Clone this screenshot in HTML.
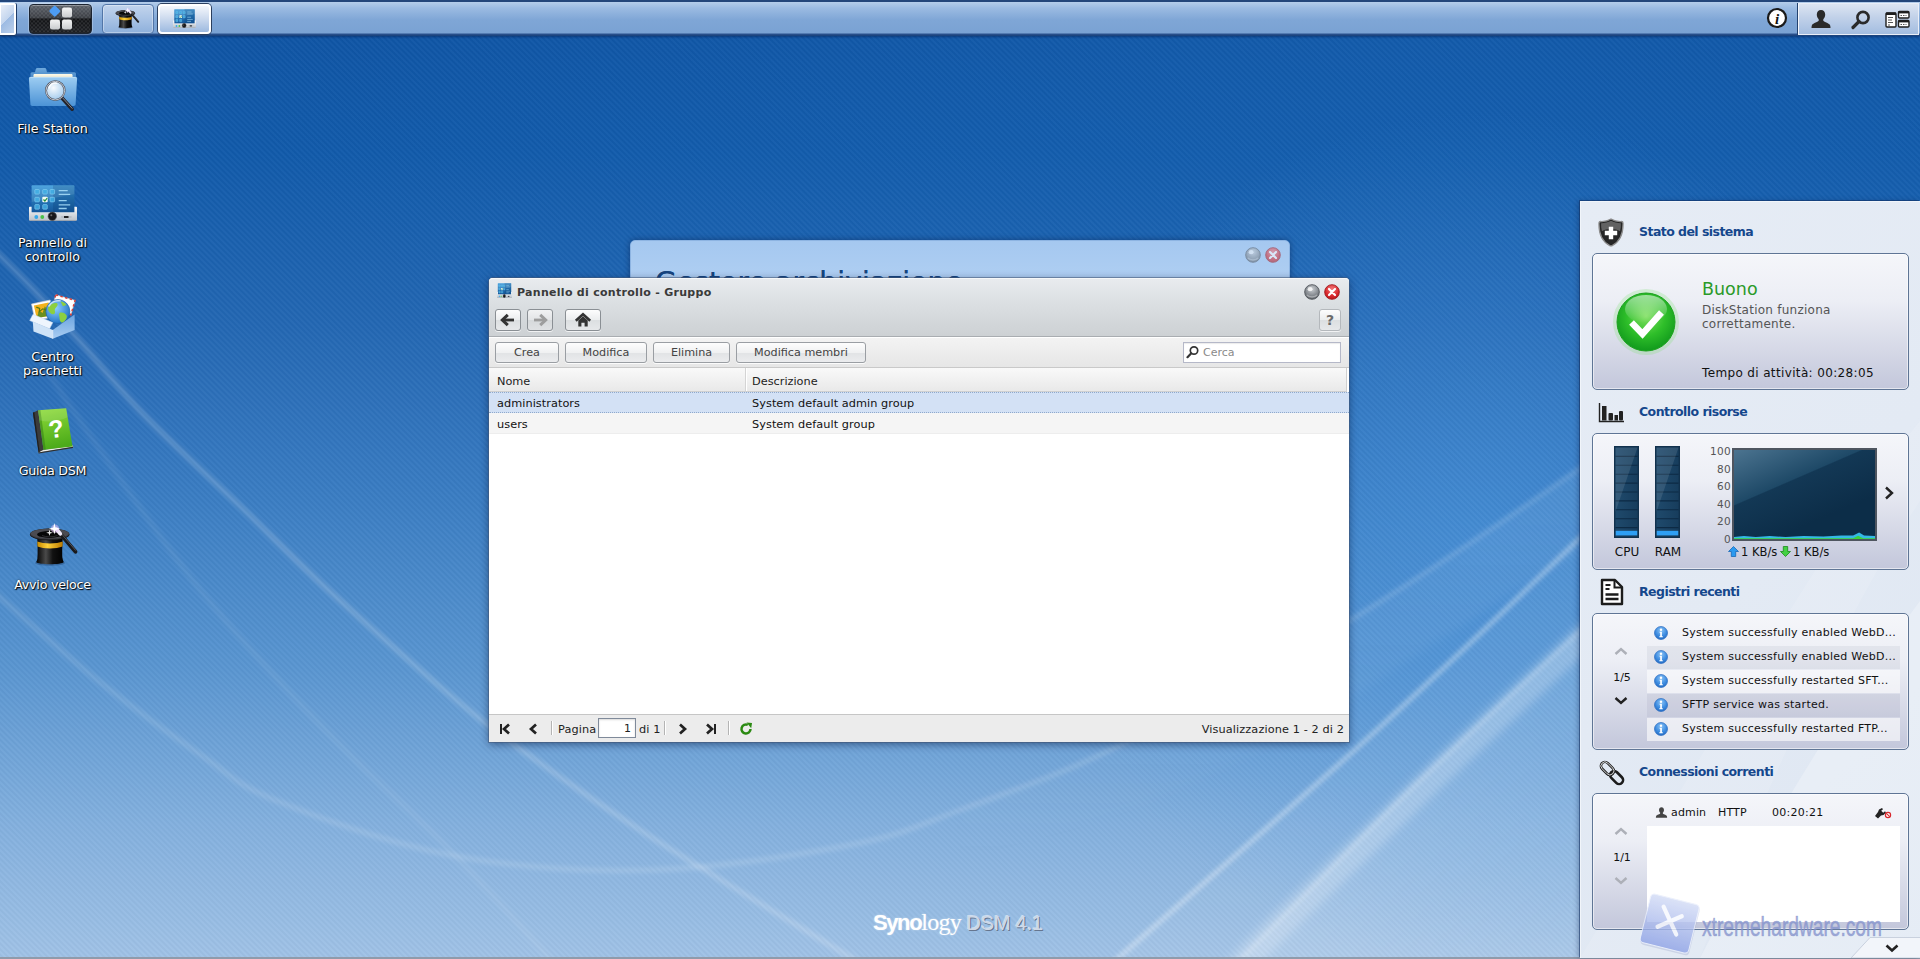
<!DOCTYPE html>
<html lang="it">
<head>
<meta charset="utf-8">
<title>Synology DiskStation</title>
<style>
*{box-sizing:border-box;margin:0;padding:0}
html,body{width:1920px;height:959px;overflow:hidden}
body{font-family:"DejaVu Sans","Liberation Sans",sans-serif;font-size:11px;color:#222;position:relative;background:#1558a6}
.abs{position:absolute}
/* ---------- wallpaper ---------- */
#wall{position:absolute;left:0;top:0;width:1920px;height:959px;
 background:linear-gradient(180deg,#0f51a0 0px,#1359a8 150px,#2467b3 330px,#3a79bf 500px,#5a90cc 680px,#7eaadb 830px,#93b9e2 959px)}
#wall svg{position:absolute;left:0;top:0}
#stripes{position:absolute;left:0;top:0;width:1920px;height:959px;
 background:repeating-linear-gradient(45deg,rgba(255,255,255,.035) 0,rgba(255,255,255,.035) 2px,rgba(0,0,0,.02) 2px,rgba(0,0,0,.02) 4px)}
/* ---------- taskbar ---------- */
#taskbar{position:absolute;left:0;top:0;width:1920px;height:36px;box-shadow:0 1px 2px rgba(0,20,70,.45);
 background:linear-gradient(180deg,#23467a 0,#23467a 2px,#b4cdea 2px,#9bbbe2 8px,#7fa6d6 20px,#7aa2d3 33px,#2d5490 34px,#163f78 36px)}

/* taskbar items */
#showdesk{position:absolute;left:0;top:3px;width:16px;height:32px;border:2px solid #fff;border-left:1px solid #fff;border-radius:0 2px 2px 0;
 background:linear-gradient(135deg,#e8eef8 0%,#c3d5ee 50%,#9dbbe3 51%,#bcd0eb 100%);box-shadow:1px 0 0 #1d3a66,0 1px 0 #1d3a66}
.tb{position:absolute;top:4px;height:30px;border-radius:4px}
#tbmenu{left:29px;width:63px;border:1px solid #1b2431;background:linear-gradient(180deg,#5b6068 0,#3a3d43 45%,#121316 50%,#1d1f23 100%);box-shadow:0 0 0 1px rgba(255,255,255,.25),inset 0 1px 0 rgba(255,255,255,.3)}
#tbhat{left:102px;width:52px;border:1px solid #5276a8;background:linear-gradient(180deg,#c2d4ec 0,#a9c3e5 50%,#8eb0db 100%);box-shadow:inset 0 0 0 1px rgba(255,255,255,.35)}
#tbcp{left:158px;width:53px;border:2px solid #fff;background:linear-gradient(180deg,#f4f7fc 0,#cfdcef 45%,#9dbae0 100%);box-shadow:0 0 0 1px #2b3f5e}
#tray{position:absolute;left:1798px;top:3px;width:121px;height:32px;border:1px solid #e9eef7;border-left:1px solid #f3f6fb;
 background:linear-gradient(180deg,#dde5f2 0,#c4d3ea 40%,#a3bde0 100%);box-shadow:-1px 0 0 #23426f}
/* ---------- desktop icons ---------- */
.dicon{position:absolute;left:0;width:105px;text-align:center;color:#fff;font-size:12.7px;line-height:14px;
 text-shadow:1px 1px 1px #000,0 0 2px rgba(0,0,0,.8)}
.dicon svg{display:block;margin:0 auto 8px}

/* ---------- windows ---------- */
#win2{position:absolute;left:630px;top:240px;width:660px;height:60px;border-radius:5px 5px 0 0;
 background:linear-gradient(180deg,#a5c8f0 0,#b4d2f3 100%);border:1px solid #8db4e2;box-shadow:0 0 6px rgba(0,20,60,.45);overflow:hidden}
#win2 .t{position:absolute;left:24px;top:25px;font-size:28px;color:#17457f;text-shadow:0 0 .6px #17457f;font-family:"DejaVu Sans",sans-serif;white-space:nowrap;letter-spacing:.2px}
#win{position:absolute;left:489px;top:278px;width:860px;height:464px;border-radius:4px 4px 0 0;background:#fff;
 box-shadow:0 0 0 1px rgba(70,90,120,.55),0 2px 8px rgba(0,20,60,.55)}
#whead{position:absolute;left:0;top:0;width:860px;height:59px;border-radius:4px 4px 0 0;
 background:linear-gradient(180deg,#e9ecef 0,#dfe3e6 30%,#d3d7da 75%,#cdd1d4 100%);border-bottom:1px solid #a9adb1;box-shadow:inset 0 1px 0 #f6f7f8}
#wtitle{position:absolute;left:28px;top:7.500px;font-weight:bold;font-size:11px;color:#3a3a3a;white-space:nowrap;line-height:14px;letter-spacing:.29px}
.nb{position:absolute;top:31px;height:22px;border:1px solid #8a8f94;border-radius:3px;background:linear-gradient(180deg,#fdfdfd 0,#ebedee 50%,#dcdfe1 51%,#e6e8ea 100%);box-shadow:0 1px 0 rgba(255,255,255,.7)}
#wtool{position:absolute;left:0;top:60px;width:860px;height:30px;background:linear-gradient(180deg,#f3f3f3 0,#e6e6e6 100%);border-bottom:1px solid #c9c9c9}
.btn{position:absolute;top:4px;height:21px;border:1px solid #9a9ea3;border-radius:3px;background:linear-gradient(180deg,#fdfdfd 0,#f0f1f2 50%,#e1e3e5 51%,#ebecee 100%);
 text-align:center;line-height:20px;color:#444;font-size:11.2px;box-shadow:0 1px 0 rgba(255,255,255,.8)}
#wsearch{position:absolute;left:694px;top:4px;width:158px;height:21px;border:1px solid #b5b8c8;background:#fff;box-shadow:inset 0 1px 1px rgba(0,0,0,.08)}
#wsearch span{position:absolute;left:19px;top:3px;color:#8a8a8a;font-size:11px}
#ghead{position:absolute;left:0;top:90px;width:858px;height:24px;background:linear-gradient(180deg,#f9f9f9 0,#e9e9e9 100%);border-bottom:1px solid #d0d0d0;border-right:1px solid #d0d0d0}
#ghead span{position:absolute;top:7px;font-size:11.3px;color:#222}
.grow{position:absolute;left:0;width:860px;height:21px;font-size:11.3px;color:#111;letter-spacing:.05px}
.grow span{position:absolute;top:5px}
#wfoot{position:absolute;left:0;top:436px;width:860px;height:28px;background:#ececec;border-top:1px solid #c6c6c6}
#wfoot .tx{position:absolute;top:8px;font-size:11.3px;color:#222;white-space:nowrap;letter-spacing:.1px}
#wfoot .sep{position:absolute;top:6px;width:1px;height:14px;background:#b4b4b4;box-shadow:1px 0 0 #fff}
.wb{position:absolute;width:16px;height:16px}

/* ---------- widget panel ---------- */
#panel{position:absolute;left:1580px;top:201px;width:340px;height:757px;background:linear-gradient(135deg,#e6ecf5 0,#e3eaf4 50%,#dde6f2 100%);
 box-shadow:inset 1px 1px 0 #f1f5fa,-1px -1px 0 rgba(20,50,100,.55),-2px 0 5px rgba(0,20,60,.3);overflow:hidden}
.ph{position:absolute;left:59px;font-weight:bold;font-size:12.5px;color:#15478c;white-space:nowrap;letter-spacing:-.55px;line-height:16px}
.pbox{position:absolute;left:12px;width:317px;height:137px;border:1px solid #5f7595;border-radius:5px;
 background:linear-gradient(180deg,#f5f6fa 0,#eceef5 35%,#d3d6e5 75%,#c3c7db 100%);box-shadow:inset 0 0 0 1px rgba(255,255,255,.55)}
.pgr{position:absolute;left:17px;width:24px;text-align:center;font-size:11px;color:#111}
.lrow{position:absolute;left:54px;width:253px;height:23px;font-size:11px;color:#111;white-space:nowrap}
.lrow span{position:absolute;left:35px;top:4px;letter-spacing:.25px}
.lrow svg{position:absolute;left:7px;top:4px}
</style>
</head>
<body>
<div id="wall">
<svg width="1920" height="959" viewBox="0 0 1920 959">
<defs>
<linearGradient id="wg" x1="0" y1="0" x2="0" y2="1">
<stop offset="0" stop-color="#0e53a3"/><stop offset=".16" stop-color="#115aaa"/><stop offset=".34" stop-color="#2367b3"/>
<stop offset=".52" stop-color="#3a7dc3"/><stop offset=".70" stop-color="#5a96d1"/><stop offset=".86" stop-color="#83b0de"/><stop offset="1" stop-color="#a0c2e6"/>
</linearGradient>
<radialGradient id="wr" cx=".72" cy=".05" r=".6"><stop offset="0" stop-color="#1c6abb" stop-opacity=".28"/><stop offset="1" stop-color="#1c6abb" stop-opacity="0"/></radialGradient>
<radialGradient id="wr2" cx="1480" cy="540" r="430" gradientUnits="userSpaceOnUse"><stop offset="0" stop-color="#4a96e0" stop-opacity=".5"/><stop offset="1" stop-color="#4a96e0" stop-opacity="0"/></radialGradient>
<linearGradient id="sheetC" x1="0" y1="0" x2="1" y2="1"><stop offset="0" stop-color="#fff" stop-opacity=".30"/><stop offset="1" stop-color="#fff" stop-opacity=".05"/></linearGradient>
<linearGradient id="sheetA" x1="0" y1="0" x2="0" y2="1"><stop offset="0" stop-color="#fff" stop-opacity=".13"/><stop offset="1" stop-color="#fff" stop-opacity="0"/></linearGradient>
<filter id="b1" x="-5%" y="-5%" width="110%" height="110%"><feGaussianBlur stdDeviation="2"/></filter>
<filter id="b3" x="-5%" y="-5%" width="110%" height="110%"><feGaussianBlur stdDeviation="4"/></filter>
<pattern id="stp" width="4" height="4" patternUnits="userSpaceOnUse" patternTransform="rotate(45)"><rect width="4" height="2" fill="#fff" fill-opacity=".032"/><rect y="2" width="4" height="2" fill="#000" fill-opacity=".022"/></pattern>
</defs>
<rect width="1920" height="959" fill="url(#wg)"/>
<rect width="1920" height="959" fill="url(#wr)"/>
<rect width="1920" height="959" fill="url(#wr2)"/>
<g filter="url(#b3)">
<path d="M960,810 C1006,793 1058,776 1123,744 C1188,712 1273,667 1349,621 C1425,575 1520,510 1578,470 C1636,430 1680,395 1950,200 L1950,330 C1700,470 1500,600 1349,700 C1200,790 1050,840 960,860 Z" fill="url(#sheetA)"/>
<path d="M1220,975 C1224,972 1216,983 1246,954 C1276,925 1345,854 1400,800 C1455,746 1528,680 1578,633 C1628,586 1680,539 1950,290 L1950,975 Z" fill="url(#sheetC)"/>
<path d="M1100,975 C1104,972 1078,994 1123,954 C1168,914 1292,807 1368,738 C1444,669 1523,593 1578,540 L1578,633 C1455,746 1276,925 1220,975 Z" fill="#fff" fill-opacity=".05"/>
<path d="M1232,975 C1276,925 1355,854 1410,800 C1465,746 1538,680 1588,633 C1628,596 1680,549 1950,300" stroke="#fff" stroke-opacity=".22" stroke-width="26" fill="none"/>
</g>
<g fill="none" stroke="#fff" filter="url(#b1)">
<path d="M-20,236 C-12,244 15,270 31,287 C47,304 58,317 77,338 C96,359 117,387 144,415 C171,443 208,476 240,506 C272,536 295,561 336,597 C377,633 433,683 484,722 C535,761 579,791 640,830 C701,869 807,931 850,957 C893,983 892,980 900,985" stroke-width="5" stroke-opacity=".22"/>
<path d="M-20,580 C-1,596 59,650 96,679 C133,708 171,735 201,755 C231,775 234,783 275,800 C316,817 388,843 450,855 C512,867 583,872 650,870 C717,868 798,855 850,845 C902,835 914,827 960,810 C1006,793 1058,776 1123,744 C1188,712 1273,667 1349,621 C1425,575 1520,510 1578,470 C1636,430 1680,395 1700,380" stroke-width="5" stroke-opacity=".15"/>
<path d="M40,360 C49,374 68,404 96,444 C124,484 166,548 206,597 C246,646 295,699 336,741 C377,783 413,812 450,850 C487,888 542,950 560,970" stroke-width="5" stroke-opacity=".08"/>
<path d="M1100,975 C1104,972 1078,994 1123,954 C1168,914 1292,807 1368,738 C1444,669 1523,593 1578,540 C1633,487 1680,440 1700,420" stroke-width="5" stroke-opacity=".34"/>
<path d="M1220,975 C1224,972 1216,983 1246,954 C1276,925 1345,854 1400,800 C1455,746 1528,680 1578,633 C1628,586 1680,539 1700,520" stroke-width="5" stroke-opacity=".22"/>
</g>
<rect width="1920" height="959" fill="url(#stp)"/>
<rect y="957" width="1920" height="2" fill="#8f9bab"/>
</svg>
</div>
<svg width="0" height="0" style="position:absolute">
<defs>
<linearGradient id="gFold" x1="0" y1="0" x2="0" y2="1"><stop offset="0" stop-color="#9dcdf2"/><stop offset="1" stop-color="#4c93d6"/></linearGradient>
<linearGradient id="gFoldB" x1="0" y1="0" x2="0" y2="1"><stop offset="0" stop-color="#6fa9dc"/><stop offset="1" stop-color="#3d7fc2"/></linearGradient>
<radialGradient id="gLens" cx=".4" cy=".35" r=".7"><stop offset="0" stop-color="#ffffff" stop-opacity=".95"/><stop offset="1" stop-color="#b9d8f2" stop-opacity=".75"/></radialGradient>
<linearGradient id="gScr" x1="0" y1="0" x2="0" y2="1"><stop offset="0" stop-color="#3a9ada"/><stop offset="1" stop-color="#14579a"/></linearGradient>
<linearGradient id="gBase" x1="0" y1="0" x2="0" y2="1"><stop offset="0" stop-color="#fafbfc"/><stop offset="1" stop-color="#b9c0c8"/></linearGradient>
<linearGradient id="gBox" x1="0" y1="0" x2="0" y2="1"><stop offset="0" stop-color="#6ba4e0"/><stop offset="1" stop-color="#a9cdf2"/></linearGradient>
<linearGradient id="gBook" x1="0" y1="0" x2=".2" y2="1"><stop offset="0" stop-color="#8fdc3a"/><stop offset="1" stop-color="#4cab1a"/></linearGradient>
<radialGradient id="gGlobe" cx=".4" cy=".35" r=".7"><stop offset="0" stop-color="#8fd0ff"/><stop offset="1" stop-color="#1c6fc4"/></radialGradient>
<linearGradient id="gHat" x1="0" y1="0" x2="1" y2="0"><stop offset="0" stop-color="#000"/><stop offset=".35" stop-color="#4a4a4a"/><stop offset=".6" stop-color="#111"/><stop offset="1" stop-color="#000"/></linearGradient>
<linearGradient id="gBand" x1="0" y1="0" x2="1" y2="0"><stop offset="0" stop-color="#c98a00"/><stop offset=".4" stop-color="#ffd23a"/><stop offset="1" stop-color="#b87800"/></linearGradient>
<radialGradient id="gMin" cx=".5" cy=".3" r=".8"><stop offset="0" stop-color="#c9cdd1"/><stop offset=".6" stop-color="#80858b"/><stop offset="1" stop-color="#4a4e54"/></radialGradient>
<radialGradient id="gCls" cx=".5" cy=".3" r=".8"><stop offset="0" stop-color="#f2787a"/><stop offset=".6" stop-color="#d8282c"/><stop offset="1" stop-color="#a81216"/></radialGradient>
<symbol id="bmin" viewBox="0 0 17 17"><circle cx="8.500" cy="8.500" r="7.800" fill="url(#gMin)" stroke="#4c5157" stroke-width=".9"/><ellipse cx="6.500" cy="5.500" rx="2.600" ry="2.200" fill="#fff" fill-opacity=".8"/><path d="M3 11.500c2 3 9 3 11 0" stroke="#fff" stroke-opacity=".35" stroke-width="1.500" fill="none"/></symbol>
<symbol id="bclose" viewBox="0 0 17 17"><circle cx="8.500" cy="8.500" r="7.800" fill="url(#gCls)" stroke="#9e1418" stroke-width=".9"/><path d="M5.300 5.300l6.400 6.400M11.700 5.300l-6.400 6.400" stroke="#fff" stroke-width="2.300" stroke-linecap="round"/></symbol>
<radialGradient id="gInfo" cx=".5" cy=".3" r=".8"><stop offset="0" stop-color="#8cc4f6"/><stop offset=".55" stop-color="#3c8be0"/><stop offset="1" stop-color="#1c5fb8"/></radialGradient>
<symbol id="iinfo" viewBox="0 0 14 14"><circle cx="7" cy="7" r="6.500" fill="url(#gInfo)" stroke="#2a6bc0" stroke-width=".7"/><circle cx="7" cy="3.800" r="1.200" fill="#fff"/><path d="M5.600 5.800h2.300v4.400h.9v1H5.300v-1h.9V6.800h-.6z" fill="#fff"/></symbol>
<symbol id="chv" viewBox="0 0 14 9"><path d="M1.500 7L7 2l5.500 5" stroke="currentColor" stroke-width="2.400" fill="none"/></symbol>
<radialGradient id="gOk" cx=".5" cy=".4" r=".6"><stop offset="0" stop-color="#7fe060"/><stop offset=".55" stop-color="#2fbf2a"/><stop offset="1" stop-color="#119a1c"/></radialGradient>
<linearGradient id="gOkH" x1="0" y1="0" x2="0" y2="1"><stop offset="0" stop-color="#fff" stop-opacity=".55"/><stop offset="1" stop-color="#fff" stop-opacity="0"/></linearGradient>
<linearGradient id="gBar" x1="0" y1="0" x2="1" y2="0"><stop offset="0" stop-color="#1f4a6c"/><stop offset="1" stop-color="#173d5d"/></linearGradient>
<linearGradient id="gCh" gradientUnits="userSpaceOnUse" x1="1" y1="1" x2="41" y2="92.800"><stop offset="0" stop-color="#4d7591"/><stop offset=".52" stop-color="#1e4967"/><stop offset=".532" stop-color="#133855"/><stop offset="1" stop-color="#0c2d48"/></linearGradient>
<symbol id="rbar" viewBox="0 0 26 92" preserveAspectRatio="none"><rect width="26" height="92" fill="#11314d"/><rect x="1.500" y="1.500" width="23" height="89" fill="url(#gBar)"/>
<path d="M1.500 10.400h23M1.500 19.300h23M1.500 28.200h23M1.500 37.100h23M1.500 46h23M1.500 54.900h23M1.500 63.800h23M1.500 72.700h23M1.500 81.600h23" stroke="#0d2a44" stroke-width="1.100"/>
<path d="M1.500 1.500h23L1.500 66z" fill="#fff" fill-opacity=".10"/><rect x="1.800" y="84.800" width="22.400" height="4.600" fill="#2e9ff4"/></symbol>
<symbol id="ifs" viewBox="0 0 50 48">
<path d="M2.500 8c0-1 .6-1.700 1.600-1.700H7l.8-3.200c.2-.7.700-1.100 1.400-1.100h7.600c.7 0 1.200.4 1.400 1.100l.8 3.200h27.400c1 0 1.600.7 1.600 1.700V14h-45.500z" fill="url(#gFoldB)"/>
<path d="M5.500 9.200c0-.7.500-1.200 1.200-1.200h36.600c.7 0 1.200.5 1.200 1.200V14h-39z" fill="#fbf8e6"/>
<path d="M6.200 10.200h37.600" stroke="#e6e2c8" stroke-width=".7"/>
<path d="M2.300 11h45.400c.9 0 1.500.7 1.400 1.600l-1.500 25.700c-.1 1-.9 1.700-1.900 1.700H4.300c-1 0-1.800-.7-1.900-1.700L.9 12.600C.8 11.700 1.400 11 2.300 11z" fill="url(#gFold)"/>
<path d="M2.300 11.400h45.400" stroke="#c4e2f8" stroke-width=".8"/>
<path d="M34.200 32.200l10 11" stroke="#23232a" stroke-width="3.600" stroke-linecap="round"/>
<path d="M34.800 32l9.300 10.300" stroke="#8a8f9c" stroke-width=".9" stroke-linecap="round"/>
<circle cx="27.300" cy="24.600" r="9" fill="url(#gLens)"/>
<circle cx="27.300" cy="24.600" r="9.300" fill="none" stroke="#4a4f5c" stroke-width="2"/>
<circle cx="27.300" cy="24.600" r="9.300" fill="none" stroke="#dfe3ea" stroke-width=".8"/>
<path d="M21 22c1.300-3.400 4.600-5.200 7.800-4.800" stroke="#fff" stroke-width="1.500" fill="none" stroke-linecap="round" stroke-opacity=".9"/>
</symbol>
<symbol id="icp" viewBox="0 0 48 36" preserveAspectRatio="none">
<rect x="2.600" y=".3" width="42.800" height="27" rx="1" fill="url(#gScr)"/>
<path d="M24 .3h21.400v27H24z" fill="#0b3c74" fill-opacity=".28"/>
<path d="M2.600 .3h42.800v9L2.600 17z" fill="#fff" fill-opacity=".10"/>
<g fill="#46b4e8" fill-opacity=".75" stroke="#8fd6f6" stroke-width=".7" stroke-opacity=".8"><rect x="5.800" y="4.500" width="4.600" height="4.600" rx=".8"/><rect x="13.700" y="4.500" width="4.600" height="4.600" rx=".8"/><rect x="21" y="4.500" width="4.600" height="4.600" rx=".8"/><rect x="5.800" y="12.300" width="4.600" height="4.600" rx=".8"/><rect x="21" y="12.300" width="4.600" height="4.600" rx=".8"/><rect x="5.800" y="19.600" width="4.600" height="4.600" rx=".8"/><rect x="13.700" y="19.600" width="4.600" height="4.600" rx=".8"/></g>
<rect x="13.300" y="11.800" width="5.400" height="5.400" rx="1" fill="#f2fbf4"/><path d="M14.500 14.500l1.400 1.500 2.300-3" stroke="#1f8f3a" stroke-width="1.200" fill="none"/>
<g stroke="#a9e0fb" stroke-width="1.300" stroke-opacity=".85"><path d="M29.700 5.700h9M29.700 9.400h11.500M29.700 15.600h8M29.700 19.800h11.500M29.700 23.500h8"/></g>
<path d="M0 22.500c0-.5.300-.8.800-.8h1.800v5.600h42.800v-5.600h1.800c.5 0 .8.300.8.800v12c0 .8-.7 1.500-1.500 1.500h-45c-.8 0-1.500-.7-1.500-1.500z" fill="url(#gBase)"/>
<path d="M1 35.600h46" stroke="#8e98a6" stroke-width=".8"/>
<circle cx="7.300" cy="32" r="1.900" fill="#35a8ea"/><circle cx="13.300" cy="32" r="1.900" fill="#4ac24a"/>
<circle cx="23.300" cy="31.300" r="4.200" fill="#17171a" stroke="#4d5158" stroke-width=".7"/><circle cx="22.300" cy="30.200" r="1" fill="#6a6a6a"/>
<rect x="31.800" y="31" width="11" height="2" rx="1" fill="#b9bfc7"/><rect x="35" y="31" width="4.500" height="2" fill="#1f2023"/>
</symbol>
<symbol id="ipkg" viewBox="0 0 48 48">
<g transform="rotate(16 33 12)"><rect x="24" y="3" width="20" height="15" fill="#fff" stroke="#d4d4d4" stroke-width=".6"/><path d="M24 3h20v15H24z" fill="none" stroke="#d8403a" stroke-width="1.500" stroke-dasharray="2.400 2.400"/></g>
<g transform="rotate(-12 13 16)"><rect x="4" y="8" width="19" height="17" fill="#fff" stroke="#cfcfcf" stroke-width=".6"/><rect x="6" y="10" width="15" height="13" fill="#f2b21c"/><path d="M6 23l4-7 3 3 3.500-6 4.500 10z" fill="#6a8f1f"/><path d="M8 12l3 2-1 3 4-2 3 2" stroke="#5a7a10" stroke-width="1.200" fill="none"/></g>
<circle cx="28.900" cy="17.500" r="12" fill="url(#gGlobe)" stroke="#1a5ea8" stroke-width=".6"/>
<path d="M20.500 12c2.200-2.400 5.500-3.600 7.800-2.500 1.200 1.700-1 3.500-2.200 5.200s1.200 4-1 5.200-4.500-1-5.700-3.400 0-3.400 1.100-4.500zM30.500 19c2.300-1.200 5.800 0 7 2.300s-1.200 5.800-3.500 7-3.500-2.300-3.500-4.600-1.200-3.500 0-4.700zM31.500 7.500c2.400 0 4.700 1.200 5.900 3.500l-3.500 1.200z" fill="#8ccf3f"/>
<path d="M20 12c2.300-4 7-5.800 11-5.200" stroke="#fff" stroke-opacity=".65" stroke-width="1.600" fill="none" stroke-linecap="round"/>
<path d="M3.800 27.500l19.900 8.400v8.800L4.500 37.400z" fill="#cfe3f7"/>
<path d="M23.700 35.900L45.600 20.500v15.400L23.700 44.700z" fill="url(#gBox)"/>
<path d="M0.700 26.500L4 20.300l19.800 8.300-3.200 6.200z" fill="#eef5fd" stroke="#c5dbf2" stroke-width=".5"/>
<path d="M23.700 28.600L45.600 20.500l1.800 5.500-23.700 9.900z" fill="#a9cbf0" fill-opacity=".0"/>
<path d="M23.700 35.900v8.800" stroke="#f2f8fe" stroke-width=".8"/>
</symbol>
<symbol id="ihelp" viewBox="0 0 48 48">
<path d="M9.800 44.600L44 39l-.4-1.800L10 42.500z" fill="#f4f4ee" stroke="#8b8b85" stroke-width=".5"/>
<path d="M9.600 45L44 39.400" stroke="#2e2e2e" stroke-width="1.100"/>
<path d="M3.900 4.800L9.100 2.300l5.400 39.400-4.900 2.700z" fill="#3b3b3b"/>
<path d="M3.900 4.800l1.400-.7 5.300 39.700-1 .6z" fill="#1f1f1f"/>
<path d="M9.100 2.300L37.200.2l6.300 38.200-29 3.300z" fill="url(#gBook)"/>
<path d="M9.100 2.300l2.300-.2 5.300 39.300-2.200.3z" fill="#2f7a12" fill-opacity=".5"/>
<path d="M9.100 2.300L37.200.2l1.500 9c-9 4-19 5.500-28.300 3z" fill="#fff" fill-opacity=".12"/>
<text x="27" y="29.500" font-family="Liberation Sans,sans-serif" font-weight="bold" font-size="25" text-anchor="middle" fill="#fff" style="text-shadow:none" transform="rotate(-8 27 20)">?</text>
</symbol>
<symbol id="ihat" viewBox="0 0 52 48">
<ellipse cx="23" cy="41" rx="15" ry="2.800" fill="#001030" fill-opacity=".25"/>
<path d="M10.200 14c0 0 1 17.500.2 22.500-.3 2-1.200 3.500-1.200 3.500 1.500 3 26.100 3 27.600 0 0 0-.9-1.500-1.200-3.500-.8-5 .2-22.500.2-22.500z" fill="url(#gHat)"/>
<path d="M10.300 19.600c6 2.600 19.400 2.600 25.400 0l-.2 5c-6 2.600-19 2.600-25 0z" fill="url(#gBand)"/>
<ellipse cx="22.700" cy="12.600" rx="19.800" ry="6" fill="#151517"/>
<ellipse cx="22.700" cy="12" rx="19.500" ry="5.500" fill="#3a3a3f"/>
<ellipse cx="22.700" cy="11.600" rx="19" ry="4.800" fill="#4b4b51"/>
<ellipse cx="22.700" cy="12.400" rx="12.600" ry="3.500" fill="#060607"/>
<path d="M15 13.500c4 1.800 11.500 1.800 15.500 0" stroke="#2c2c30" stroke-width="1" fill="none"/>
<path d="M32 10.200l16.500 19.500" stroke="#19191b" stroke-width="3.800" stroke-linecap="round"/>
<path d="M33 10l15.500 18.300" stroke="#5a5a60" stroke-width=".9" stroke-linecap="round"/>
<path d="M29.500 7.300l3.800 4.400" stroke="#efe9f8" stroke-width="3.800" stroke-linecap="round"/>
<circle cx="28" cy="6.700" r="4.200" fill="#e9c4ff" fill-opacity=".5"/>
<path d="M27.400 1l1.100 4.400 4.400 1.300-4.400 1.300-1.100 4.400-1.100-4.400-4.400-1.300 4.400-1.300z" fill="#fff"/>
<path d="M22.500 7.500l.7 2.600 2.600.7-2.600.7-.7 2.600-.7-2.600-2.600-.7 2.600-.7z" fill="#fff" fill-opacity=".9"/>
</symbol>
</defs></svg>

<div class="dicon" style="top:66px"><svg width="50" height="48" style="margin:0 0 8px 28px"><use href="#ifs"/></svg>File Station</div>
<div class="dicon" style="top:185px"><svg width="48" height="36" style="margin:0 0 15px 29px"><use href="#icp"/></svg>Pannello di<br>controllo</div>
<div class="dicon" style="top:294px"><svg width="48" height="48"><use href="#ipkg"/></svg>Centro<br>pacchetti</div>
<div class="dicon" style="top:408px"><svg width="48" height="48" style="margin:0 0 8px 29px"><use href="#ihelp"/></svg><span style="letter-spacing:-.3px">Guida DSM</span></div>
<div class="dicon" style="top:522px"><svg width="52" height="48"><use href="#ihat"/></svg><span style="letter-spacing:-.25px">Avvio veloce</span></div>
<div id="taskbar">
<div id="showdesk"></div>
<div class="tb" id="tbmenu"><svg width="61" height="28" viewBox="1 .600 61 28" style="position:absolute;left:0;top:0">
<defs><linearGradient id="sq" x1="0" y1="0" x2="0" y2="1"><stop offset="0" stop-color="#f4f4f4"/><stop offset="1" stop-color="#c9cbce"/></linearGradient>
<pattern id="chk" width="4" height="4" patternUnits="userSpaceOnUse"><rect width="2" height="2" fill="#fff" fill-opacity=".10"/><rect x="2" y="2" width="2" height="2" fill="#fff" fill-opacity=".10"/></pattern></defs>
<rect width="61" height="28" rx="3" fill="url(#chk)"/>
<rect x="33" y="3" width="10" height="10" rx="2" fill="url(#sq)"/><rect x="21" y="15" width="10" height="10" rx="2" fill="url(#sq)"/><rect x="33" y="15" width="10" height="10" rx="2" fill="url(#sq)"/>
<rect x="21.5" y="2.5" width="8.5" height="8.5" rx="1.5" fill="#4d9cf3" transform="rotate(45 25.75 6.75)"/></svg></div>
<div class="tb" id="tbhat"><svg width="26" height="24" style="position:absolute;left:11px;top:2px"><use href="#ihat"/></svg></div>
<div class="tb" id="tbcp"><svg width="23" height="19" style="position:absolute;left:13px;top:3px"><use href="#icp"/></svg></div>
<svg width="22" height="22" viewBox="0 0 22 22" style="position:absolute;left:1766px;top:7px"><circle cx="11" cy="11" r="9" fill="#fff" stroke="#1a1a1a" stroke-width="2.2"/><text x="11" y="16.5" font-family="Liberation Serif,serif" font-style="italic" font-weight="bold" font-size="15" text-anchor="middle" fill="#111">i</text></svg>
<div id="tray">
<svg width="22" height="20" viewBox="0 0 22 20" style="position:absolute;left:11px;top:5px"><path d="M11 1c2.6 0 4.2 2 4.2 4.6 0 1.900-.8 3.600-1.900 4.600v1.500c0 .9 5.700 2.300 6.700 4.300.4.800.5 2 .5 3h-19c0-1 .1-2.200.5-3 1-2 6.700-3.400 6.700-4.300v-1.500c-1.100-1-1.900-2.700-1.900-4.600 0-2.600 1.600-4.600 4.200-4.600z" fill="#2a2a2a"/></svg>
<svg width="22" height="22" viewBox="0 0 22 22" style="position:absolute;left:51px;top:5px"><circle cx="13" cy="8.500" r="5.600" fill="none" stroke="#2a2a2a" stroke-width="2.600"/><path d="M9 12.500L3 18.500" stroke="#2a2a2a" stroke-width="3.200" stroke-linecap="round"/></svg>
<svg width="26" height="20" viewBox="0 0 26 20" style="position:absolute;left:86px;top:6px"><rect x="1" y="3" width="10" height="14" rx="1" fill="#fff" stroke="#1d1d1d" stroke-width="1.400"/><rect x="1" y="2.500" width="10" height="2.500" fill="#1d1d1d"/><path d="M3 7.500h5M3 10h4M3 12.500h5M3 15h2" stroke="#555" stroke-width="1"/>
<rect x="13.500" y="1.500" width="10.500" height="6.500" rx="1" fill="#fff" stroke="#1d1d1d" stroke-width="1.400"/><rect x="13.500" y="1" width="10.500" height="2.400" fill="#1d1d1d"/><rect x="13.500" y="10.500" width="10.500" height="6.500" rx="1" fill="#fff" stroke="#1d1d1d" stroke-width="1.400"/><rect x="13.500" y="10" width="10.500" height="2.400" fill="#1d1d1d"/><path d="M15.500 5.500h6M15.500 14.500h6" stroke="#555" stroke-width="1" stroke-dasharray="1.500 1"/></svg>
</div>
</div>

<div id="win2"><div class="t">Gestore archiviazione</div>
<svg class="wb" style="left:614px;top:6px;opacity:.55" viewBox="0 0 17 17"><use href="#bmin"/></svg>
<svg class="wb" style="left:634px;top:6px;opacity:.55" viewBox="0 0 17 17"><use href="#bclose"/></svg>
</div>
<div id="win">
<div id="whead">
<svg width="15" height="15" style="position:absolute;left:8px;top:5px"><use href="#icp"/></svg>
<div id="wtitle">Pannello di controllo - Gruppo</div>
<svg class="wb" style="left:815px;top:6px" viewBox="0 0 17 17"><use href="#bmin"/></svg>
<svg class="wb" style="left:835px;top:6px" viewBox="0 0 17 17"><use href="#bclose"/></svg>
<div class="nb" style="left:6px;width:26px"><svg width="24" height="20" viewBox="0 0 24 20"><path d="M7.500 10h10.500" stroke="#333" stroke-width="2.800" fill="none"/><path d="M11.800 4.800L6.300 10l5.500 5.200" stroke="#333" stroke-width="3" fill="none" stroke-linejoin="miter"/></svg></div>
<div class="nb" style="left:38px;width:26px;background:linear-gradient(180deg,#f1f2f3 0,#e2e4e6 50%,#d6d9db 51%,#dfe1e3 100%)"><svg width="24" height="20" viewBox="0 0 24 20"><path d="M6 10h10.500" stroke="#9d9d9d" stroke-width="2.800" fill="none"/><path d="M12.200 4.800L17.700 10l-5.500 5.200" stroke="#9d9d9d" stroke-width="3" fill="none"/></svg></div>
<div class="nb" style="left:76px;width:36px"><svg width="34" height="20" viewBox="0 0 34 20"><path d="M9.800 10.800L17 4.300l7.200 6.500" stroke="#333" stroke-width="2.600" fill="none" stroke-linejoin="miter"/><path d="M12.300 10.500L17 6.300l4.700 4.200v6h-3.100v-3.800h-3.200v3.800h-3.100z" fill="#333"/></svg></div>
<div class="nb" style="left:830px;width:22px;border-color:#b4b8bc"><span style="position:absolute;left:0;width:20px;top:1px;text-align:center;font-weight:bold;font-size:14px;color:#6b6b6b;line-height:18px">?</span></div>
</div>
<div id="wtool">
<div class="btn" style="left:6px;width:64px">Crea</div>
<div class="btn" style="left:76px;width:82px">Modifica</div>
<div class="btn" style="left:164px;width:77px">Elimina</div>
<div class="btn" style="left:247px;width:130px">Modifica membri</div>
<div id="wsearch"><svg width="14" height="14" viewBox="0 0 14 14" style="position:absolute;left:2px;top:2px"><circle cx="8" cy="5.500" r="3.700" fill="none" stroke="#333" stroke-width="1.700"/><path d="M5.300 8.300L1.500 12.200" stroke="#333" stroke-width="2.200" stroke-linecap="round"/></svg><span>Cerca</span></div>
</div>
<div id="ghead"><span style="left:8px">Nome</span><span style="left:263px">Descrizione</span><i style="position:absolute;left:256px;top:0;width:1px;height:23px;background:#d4d4d4;box-shadow:1px 0 0 #fff"></i></div>
<div class="grow" style="top:114px;background:#d3e1f5;border-top:1px dotted #8fa9cc;border-bottom:1px dotted #8fa9cc"><span style="left:8px;top:4px">administrators</span><span style="left:263px;top:4px">System default admin group</span></div>
<div class="grow" style="top:135px;background:#f5f5f5;border-bottom:1px solid #ededed"><span style="left:8px">users</span><span style="left:263px">System default group</span></div>
<div id="wfoot">
<svg width="12" height="12" viewBox="0 0 12 12" style="position:absolute;left:10px;top:8px"><path d="M2 1v10" stroke="#222" stroke-width="2"/><path d="M10 1.500L5 6l5 4.500" stroke="#222" stroke-width="2.700" fill="none"/></svg>
<svg width="12" height="12" viewBox="0 0 12 12" style="position:absolute;left:38px;top:8px"><path d="M9 1.500L4 6l5 4.500" stroke="#222" stroke-width="2.700" fill="none"/></svg>
<i class="sep" style="left:62px"></i>
<span class="tx" style="left:69px">Pagina</span>
<div style="position:absolute;left:109px;top:3px;width:38px;height:20px;border:1px solid #7f8a9a;background:#fff;box-shadow:inset 0 1px 2px rgba(0,0,0,.15);font-size:11px;text-align:right;padding:3px 4px 0 0;color:#222">1</div>
<span class="tx" style="left:150px">di 1</span>
<i class="sep" style="left:175px"></i>
<svg width="12" height="12" viewBox="0 0 12 12" style="position:absolute;left:188px;top:8px"><path d="M3 1.500L8 6l-5 4.500" stroke="#222" stroke-width="2.700" fill="none"/></svg>
<svg width="12" height="12" viewBox="0 0 12 12" style="position:absolute;left:216px;top:8px"><path d="M10 1v10" stroke="#222" stroke-width="2"/><path d="M2 1.500L7 6l-5 4.500" stroke="#222" stroke-width="2.700" fill="none"/></svg>
<i class="sep" style="left:239px"></i>
<svg width="14" height="14" viewBox="0 0 14 14" style="position:absolute;left:250px;top:7px"><path d="M11.500 7A4.500 4.500 0 1 1 8.800 2.900" stroke="#2b8a12" stroke-width="2.500" fill="none"/><path d="M7.500 0.500L13 1 12.200 6.300z" fill="#2b8a12"/></svg>
<span class="tx" style="right:5px">Visualizzazione 1 - 2 di 2</span>
</div>
</div>

<div id="panel">
<svg style="position:absolute;left:0;top:0" width="340" height="757"><path d="M120,757 C200,600 280,480 340,400 L340,757 Z" fill="#fff" fill-opacity=".25"/><path d="M0,757 C120,560 250,330 340,220 L340,300 C260,420 180,600 120,757 Z" fill="#fff" fill-opacity=".12"/></svg>
<!-- Stato del sistema -->
<svg width="26" height="29" viewBox="0 0 26 29" style="position:absolute;left:18px;top:17px"><path d="M13 1c2.500 1.600 6.500 2.700 10.500 2.500 1 0 1.500.6 1.500 1.500.3 9-2 18-10.800 22.600-.8.400-1.600.400-2.400 0C3 23 .7 14 1 5c0-.9.500-1.500 1.500-1.500C6.500 3.700 10.500 2.600 13 1z" fill="#262626" stroke="#8c8c8c" stroke-width="1.300"/><path d="M13 2.800c2.700 1.500 6.300 2.400 9.900 2.400.1 2.700-.1 5.400-.8 8-4.800-2.800-13.400-2.800-18.200 0-.7-2.600-.9-5.300-.8-8 3.600 0 7.200-.9 9.900-2.400z" fill="#fff" fill-opacity=".28"/><path d="M10.800 8.800h4.400v4h4v4.400h-4v4h-4.400v-4h-4v-4.400h4z" fill="#fff"/></svg>
<div class="ph" style="top:23px">Stato del sistema</div>
<div class="pbox" style="top:52px">
<svg width="70" height="70" viewBox="0 0 70 70" style="position:absolute;left:18px;top:33px"><circle cx="35" cy="35" r="33" fill="#7de070" fill-opacity=".25"/><circle cx="35" cy="35" r="29" fill="url(#gOk)" stroke="#1da21f" stroke-width="1"/><ellipse cx="35" cy="22" rx="21" ry="14" fill="url(#gOkH)"/><path d="M20.500 35.500l11 11.500 19-21.500" stroke="#fff" stroke-width="6.500" fill="none"/></svg>
<div style="position:absolute;left:109px;top:25px;font-size:17.5px;color:#2a9a28;line-height:20px">Buono</div>
<div style="position:absolute;left:109px;top:49px;font-size:12px;color:#555;line-height:14px;white-space:nowrap;letter-spacing:.25px">DiskStation funziona<br>correttamente.</div>
<div style="position:absolute;left:109px;top:112px;font-size:12px;color:#111;line-height:14px;white-space:nowrap;letter-spacing:.36px">Tempo di attività: 00:28:05</div>
</div>
<!-- Controllo risorse -->
<svg width="27" height="20" viewBox="0 0 27 20" style="position:absolute;left:18px;top:202px"><path d="M1.500 0v18.500H26" stroke="#222" stroke-width="1.400" fill="none"/><rect x="4" y="3" width="4.500" height="14.500" fill="#222"/><rect x="10.500" y="10" width="4.500" height="7.500" rx="1" fill="#222"/><rect x="16.500" y="12" width="3.500" height="5.500" fill="#222"/><rect x="21" y="8" width="4" height="9.500" rx="1" fill="#222"/></svg>
<div class="ph" style="top:203px">Controllo risorse</div>
<div class="pbox" style="top:232px">
<svg width="25" height="92" preserveAspectRatio="none" style="position:absolute;left:21px;top:12px"><use href="#rbar"/></svg>
<svg width="25" height="92" preserveAspectRatio="none" style="position:absolute;left:62px;top:12px"><use href="#rbar"/></svg>
<div style="position:absolute;left:14px;width:40px;top:111px;text-align:center;font-size:12px;color:#111">CPU</div>
<div style="position:absolute;left:55px;width:40px;top:111px;text-align:center;font-size:12px;color:#111">RAM</div>
<div style="position:absolute;left:100px;top:9px;width:38px;text-align:right;font-size:10.5px;color:#555;line-height:17.600px;letter-spacing:.3px">100<br>80<br>60<br>40<br>20<br>0</div>
<svg width="145" height="93" viewBox="0 0 146 94" preserveAspectRatio="none" style="position:absolute;left:139px;top:14px"><rect x="1" y="1" width="144" height="92" fill="url(#gCh)" stroke="#4f5660" stroke-width="2"/><path d="M2 90l10-1 12 1 14-1 16 1 18-1 20 .500 18-1 12 0 6-3 5 3 11 .500V92H2z" fill="#35b8e6"/><path d="M2 91.200h120l5-2.500 5 2.500h12V92H2z" fill="#3bd23b"/></svg>
<svg width="10" height="14" viewBox="0 0 10 14" style="position:absolute;left:291px;top:52px"><path d="M2 1.500l6 5.500-6 5.500" stroke="#222" stroke-width="2.400" fill="none"/></svg>
<svg width="11" height="11" viewBox="0 0 11 11" style="position:absolute;left:135px;top:112px"><path d="M5.500 .5l5 5h-2.800v5H3.300v-5H.5z" fill="#2a9af0" stroke="#1668b8" stroke-width=".8"/></svg>
<div style="position:absolute;left:148px;top:111px;font-size:11.500px;color:#111;white-space:nowrap">1 KB/s</div>
<svg width="11" height="11" viewBox="0 0 11 11" style="position:absolute;left:187px;top:112px"><path d="M5.500 10.500l5-5h-2.800v-5H3.300v5H.5z" fill="#43d143" stroke="#1c8a1c" stroke-width=".8"/></svg>
<div style="position:absolute;left:200px;top:111px;font-size:11.500px;color:#111;white-space:nowrap">1 KB/s</div>
</div>
<!-- Registri recenti -->
<svg width="24" height="28" viewBox="0 0 24 28" style="position:absolute;left:20px;top:377px"><path d="M2 2h13l7 7v17H2z" fill="#fff" stroke="#1c1c1c" stroke-width="2.400" stroke-linejoin="round"/><path d="M14.500 2v7.500H22" fill="none" stroke="#1c1c1c" stroke-width="2"/><path d="M5.500 7h5M5.500 11h4" stroke="#1c1c1c" stroke-width="1.900"/><path d="M5.500 16.500h13M5.500 21h13" stroke="#1c1c1c" stroke-width="2.300"/></svg>
<div class="ph" style="top:383px">Registri recenti</div>
<div class="pbox" style="top:412px">
<svg width="14" height="9" style="position:absolute;left:21px;top:33px;color:#adb0b8"><use href="#chv"/></svg>
<div class="pgr" style="top:57px">1/5</div>
<svg width="14" height="9" style="position:absolute;left:21px;top:82px;color:#222;transform:rotate(180deg)"><use href="#chv"/></svg>
<div class="lrow" style="top:8px"><svg width="14" height="14"><use href="#iinfo"/></svg><span>System successfully enabled WebD...</span></div>
<div class="lrow" style="top:32px;background:rgba(120,125,150,.10)"><svg width="14" height="14"><use href="#iinfo"/></svg><span>System successfully enabled WebD...</span></div>
<div class="lrow" style="top:56px;background:rgba(255,255,255,.55)"><svg width="14" height="14"><use href="#iinfo"/></svg><span>System successfully restarted SFT...</span></div>
<div class="lrow" style="top:80px;background:rgba(130,135,160,.13)"><svg width="14" height="14"><use href="#iinfo"/></svg><span>SFTP service was started.</span></div>
<div class="lrow" style="top:104px;background:rgba(255,255,255,.6)"><svg width="14" height="14"><use href="#iinfo"/></svg><span>System successfully restarted FTP...</span></div>
</div>
<!-- Connessioni correnti -->
<svg width="26" height="26" viewBox="0 0 26 26" style="position:absolute;left:19px;top:559px"><g fill="none" stroke="#1c1c1c" stroke-width="2.600" transform="rotate(45 13 13)"><rect x="-1" y="9" width="15" height="8" rx="4"/><rect x="12" y="9" width="15" height="8" rx="4"/></g><g fill="none" stroke="#fff" stroke-width=".8" transform="rotate(45 13 13)"><rect x="-1" y="9" width="15" height="8" rx="4"/></g></svg>
<div class="ph" style="top:563px">Connessioni correnti</div>
<div class="pbox" style="top:592px">
<svg width="14" height="9" style="position:absolute;left:21px;top:33px;color:#adb0b8"><use href="#chv"/></svg>
<div class="pgr" style="top:57px">1/1</div>
<svg width="14" height="9" style="position:absolute;left:21px;top:82px;color:#adb0b8;transform:rotate(180deg)"><use href="#chv"/></svg>
<div style="position:absolute;left:54px;top:32px;width:253px;height:96px;background:#fff"></div>
<svg width="13" height="13" viewBox="0 0 22 20" style="position:absolute;left:62px;top:12px"><path d="M11 1c2.600 0 4.200 2 4.200 4.600 0 1.900-.8 3.600-1.900 4.600v1.500c0 .9 5.700 2.300 6.700 4.300.4.800.5 2 .5 3h-19c0-1 .1-2.200.5-3 1-2 6.700-3.400 6.700-4.300v-1.500c-1.100-1-1.900-2.700-1.900-4.600C6.800 3 8.400 1 11 1z" fill="#444"/></svg>
<div style="position:absolute;left:78px;top:12px;font-size:11px;color:#111;letter-spacing:.15px">admin</div>
<div style="position:absolute;left:125px;top:12px;font-size:11px;color:#111;letter-spacing:.15px">HTTP</div>
<div style="position:absolute;left:179px;top:12px;font-size:11px;color:#111;letter-spacing:.25px">00:20:21</div>
<svg width="18" height="12" viewBox="0 0 18 12" style="position:absolute;left:281px;top:13px"><path d="M1 9l3-4 1-2.500 3-1.500 1 1.200-1.800 1.600 2 2 1.800-1.600 1 1.300-2.500 2.500-2.500.5-3 3z" fill="#222"/><circle cx="14" cy="8" r="2.600" fill="#fff" stroke="#d8262c" stroke-width="1.200"/><path d="M12.300 6.400l3.400 3.200" stroke="#d8262c" stroke-width="1.100"/></svg>
</div>
<!-- watermark -->
<svg width="260" height="70" viewBox="0 0 260 70" style="position:absolute;left:52px;top:690px"><defs><linearGradient id="gWm" x1="0" y1="0" x2="0" y2="1"><stop offset="0" stop-color="#d3dcf6"/><stop offset="1" stop-color="#8ea2e6"/></linearGradient></defs>
<g transform="rotate(14 35 35)" opacity=".8"><rect x="13" y="9" width="50" height="50" rx="4" fill="#6a78b0" fill-opacity=".25"/><rect x="12" y="7" width="50" height="50" rx="4" fill="url(#gWm)" stroke="#e9eefb" stroke-width="1"/><path d="M27 17l19 24M47 22L26 38" stroke="#f6f8fe" stroke-width="4.200" stroke-linecap="round"/></g>
<text x="70" y="45" font-family="Liberation Sans,sans-serif" font-size="27" fill="#8492cc" fill-opacity=".75" stroke="#8492cc" stroke-opacity=".6" stroke-width=".7" textLength="180" lengthAdjust="spacingAndGlyphs">xtremehardware.com</text></svg>
<svg width="80" height="22" viewBox="0 0 80 22" style="position:absolute;left:262px;top:735px"><path d="M9 22L28 1.500h52V22z" fill="#f2f5fa" stroke="#c9d1de" stroke-width="1"/><path d="M44.500 9.500l5.500 5 5.500-5" stroke="#222" stroke-width="2.600" fill="none"/></svg>
</div>
<!-- bottom logo -->
<div style="position:absolute;left:873px;top:907px;white-space:nowrap;color:#fff;line-height:30px;text-shadow:0 0 2px rgba(255,255,255,.5)">
<span style="font-family:'Liberation Sans',sans-serif;font-weight:bold;font-size:22px;letter-spacing:-1.400px">Syno</span><span style="font-family:'Liberation Serif',serif;font-size:24px;letter-spacing:-.700px">logy</span>
<span style="font-family:'Liberation Sans',sans-serif;font-size:20px;color:#cfd8e6;text-shadow:1px 1px 0 #66768f,-1px -1px 0 rgba(255,255,255,.5);margin-left:2px;letter-spacing:-.2px">DSM 4.1</span></div>
</body>
</html>
